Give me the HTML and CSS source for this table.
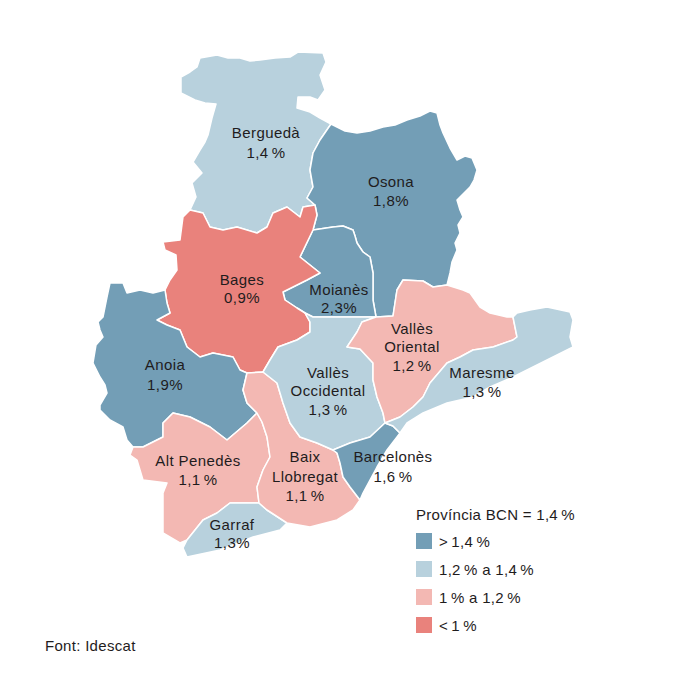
FILE: index.html
```html
<!DOCTYPE html>
<html lang="ca">
<head>
<meta charset="utf-8">
<title>Mapa comarques BCN</title>
<link rel="stylesheet" href="styles.css">
</head>
<body>
<div class="page">
  <svg class="map" viewBox="0 0 695 636" xmlns="http://www.w3.org/2000/svg">
    <g class="regions">
      <path class="region c2" d="M190,210 L196,197 192,183 202,173 193,162 200,150 205,142 208,135 212,118 216,104 205,103 195,100 181,93 181,77 190,72 197,67 200,58 217,55 228,58 240,58 250,61 260,60 275,58 290,57 298,52 323,53 326,62 320,75 325,90 318,100 310,97 298,97 297,108 310,112 320,118 331,124 320,140 313,153 310,170 313,187 307,198 315,205 303,207 300,217 287,207 273,213 267,227 257,233 237,227 223,230 210,227 203,213 Z"/>
      <path class="region c1" d="M331,124 L345,131 357,133 370,131 383,127 395,125 407,120 420,116 430,111 437,113 440,125 443,133 450,148 457,160 465,156 472,158 477,170 474,180 470,187 462,195 457,200 460,210 463,217 458,225 460,233 455,243 457,250 452,262 450,273 447,285 433,287 423,281 403,280 397,290 393,316 376,317 373,300 373,273 370,257 363,252 357,243 355,236 353,230 343,226 333,227 313,230 317,215 315,205 307,198 313,187 310,170 313,153 320,140 Z"/>
      <path class="region c1" d="M313,230 L333,227 343,226 353,230 355,236 357,243 363,252 370,257 373,273 373,300 376,317 350,317 313,317 305,313 297,308 285,300 283,292 307,280 320,273 300,257 Z"/>
      <path class="region c4" d="M190,210 L203,213 210,227 223,230 237,227 257,233 267,227 273,213 287,207 300,217 303,207 315,205 317,215 313,230 300,257 320,273 307,280 283,292 285,300 297,308 305,313 310,322 310,332 297,340 278,347 270,360 263,372 247,373 240,370 233,357 213,353 200,357 187,347 180,330 167,325 157,320 170,313 167,303 165,290 170,280 177,270 176,255 165,250 163,242 180,240 183,217 Z"/>
      <path class="region c1" d="M165,290 L167,303 170,313 157,320 167,325 180,330 187,347 200,357 213,353 233,357 240,370 247,373 243,390 247,403 257,413 247,423 227,440 210,427 190,417 173,413 163,423 163,437 143,447 133,447 127,440 123,427 110,420 100,410 100,405 107,393 105,385 100,377 93,363 96,345 103,337 100,330 98,322 103,317 107,297 110,283 123,283 127,293 140,290 153,293 Z"/>
      <path class="region c3" d="M133,447 L143,447 163,437 163,423 173,413 190,417 210,427 227,440 247,423 257,413 262,422 267,437 270,457 263,470 257,487 259,503 247,503 230,503 217,513 203,520 187,540 180,543 163,533 163,493 167,483 143,480 137,460 130,455 Z"/>
      <path class="region c2" d="M187,540 L203,520 217,513 230,503 247,503 259,503 267,510 287,523 280,530 253,537 220,550 187,557 183,548 Z"/>
      <path class="region c3" d="M263,372 L247,373 243,390 247,403 257,413 262,422 267,437 270,457 263,470 257,487 259,503 267,510 287,523 310,527 337,520 353,510 360,500 350,487 343,477 340,463 337,453 333,450 317,443 300,437 290,423 283,403 277,383 Z"/>
      <path class="region c2" d="M305,313 L313,317 350,317 376,317 362,322 357,332 347,347 360,349 373,363 373,380 377,397 383,413 385,423 370,437 350,443 333,450 317,443 300,437 290,423 283,403 277,383 263,372 270,360 278,347 297,340 310,332 310,322 Z"/>
      <path class="region c1" d="M333,450 L350,443 370,437 385,423 393,426 400,433 397,437 387,450 377,467 370,480 363,493 360,500 350,487 343,477 340,463 337,453 Z"/>
      <path class="region c3" d="M376,317 L393,316 397,290 403,280 423,281 433,287 447,285 463,290 470,293 480,307 490,313 507,317 513,317 517,337 513,340 493,347 473,350 460,357 447,363 430,383 423,397 413,407 400,417 385,423 383,413 377,397 373,380 373,363 360,349 347,347 357,332 362,322 Z"/>
      <path class="region c2" d="M513,317 L517,313 530,310 547,307 570,312 573,320 570,337 573,347 567,350 547,360 527,370 513,377 490,387 473,397 447,403 423,413 407,423 400,433 393,426 385,423 400,417 413,407 423,397 430,383 447,363 460,357 473,350 493,347 513,340 517,337 Z"/>
    </g>
    <g class="labels">
      <text x="266" y="138">Berguedà</text>
      <text x="266" y="158">1,4&#8201;%</text>
      <text x="391" y="187">Osona</text>
      <text x="391" y="206">1,8%</text>
      <text x="242" y="285">Bages</text>
      <text x="242" y="303">0,9%</text>
      <text x="339" y="295">Moianès</text>
      <text x="339" y="313">2,3%</text>
      <text x="412" y="334">Vallès</text>
      <text x="412" y="352">Oriental</text>
      <text x="412" y="371">1,2&#8201;%</text>
      <text x="328" y="378">Vallès</text>
      <text x="328" y="396">Occidental</text>
      <text x="328" y="415">1,3&#8201;%</text>
      <text x="482" y="378">Maresme</text>
      <text x="482" y="397">1,3&#8201;%</text>
      <text x="165" y="370">Anoia</text>
      <text x="165" y="390">1,9%</text>
      <text x="198" y="466">Alt Penedès</text>
      <text x="198" y="485">1,1&#8201;%</text>
      <text x="305" y="462">Baix</text>
      <text x="305" y="482">Llobregat</text>
      <text x="305" y="501">1,1&#8201;%</text>
      <text x="393" y="462">Barcelonès</text>
      <text x="393" y="482">1,6&#8201;%</text>
      <text x="232" y="530">Garraf</text>
      <text x="232" y="548">1,3%</text>
    </g>
  </svg>
  <div class="legend">
    <div class="legend-title">Província BCN = 1,4&#8201;%</div>
    <div class="legend-row"><span class="swatch c1"></span><span>&gt;&#8201;1,4&#8201;%</span></div>
    <div class="legend-row"><span class="swatch c2"></span><span>1,2&#8201;% a 1,4&#8201;%</span></div>
    <div class="legend-row"><span class="swatch c3"></span><span>1&#8201;% a 1,2&#8201;%</span></div>
    <div class="legend-row"><span class="swatch c4"></span><span>&lt;&#8201;1&#8201;%</span></div>
  </div>
  <div class="source">Font: Idescat</div>
</div>
</body>
</html>
```
FILE: styles.css
```css
body {
  margin: 0;
  background: #ffffff;
  font-family: "Liberation Sans", Arial, sans-serif;
  color: #1f1c1d;
}

.page {
  position: relative;
  width: 695px;
  height: 695px;
  overflow: hidden;
}

.map {
  display: block;
  width: 695px;
  height: 636px;
}

.region {
  stroke: #ffffff;
  stroke-width: 1.5;
  stroke-linejoin: round;
}

.c1 { fill: #739eb6; background: #739eb6; }
.c2 { fill: #b8d1dd; background: #b8d1dd; }
.c3 { fill: #f3b8b3; background: #f3b8b3; }
.c4 { fill: #e9827c; background: #e9827c; }

.labels text {
  font-family: "Liberation Sans", Arial, sans-serif;
  font-size: 15px;
  letter-spacing: 0.4px;
  fill: #1f1c1d;
  text-anchor: middle;
}

.legend {
  position: absolute;
  left: 416px;
  top: 505px;
}

.legend-title {
  font-size: 15px;
  line-height: 20px;
  letter-spacing: 0.3px;
  margin-bottom: 2px;
}

.legend-row {
  display: flex;
  align-items: center;
  gap: 7px;
  height: 28px;
  font-size: 15px;
  letter-spacing: 0.3px;
}

.swatch {
  display: block;
  width: 16px;
  height: 16px;
}

.source {
  padding-left: 45px;
  font-size: 15px;
  line-height: 20px;
  letter-spacing: 0.3px;
}
```
